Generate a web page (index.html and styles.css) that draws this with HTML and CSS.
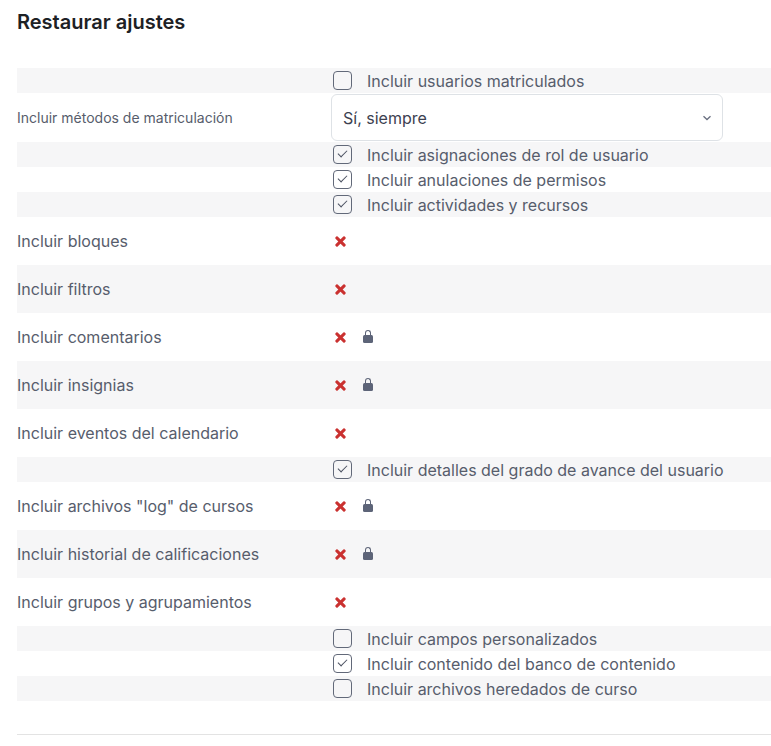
FILE: index.html
```html
<!DOCTYPE html>
<html lang="es">
<head>
  <meta charset="UTF-8">
  <title>Restaurar ajustes</title>
  <link rel="stylesheet" href="styles.css">
</head>
<body>
  <div class="container">
    <h3>Restaurar ajustes</h3>

    <div class="settings">
      <div class="row check-row">
        <div class="label"></div>
        <div class="value"><span class="box"></span>Incluir usuarios matriculados</div>
      </div>
      <div class="row select-row">
        <div class="label small">Incluir métodos de matriculación</div>
        <div class="value">
          <div class="select">
            <span>Sí, siempre</span>
            <svg width="10" height="6" viewBox="0 0 10 6"><path d="M1.5 1.2 5 4.5 8.5 1.2" fill="none" stroke="#6a7080" stroke-width="1.3"/></svg>
          </div>
        </div>
      </div>
      <div class="row check-row">
        <div class="label"></div>
        <div class="value"><span class="box checked"></span>Incluir asignaciones de rol de usuario</div>
      </div>
      <div class="row check-row">
        <div class="label"></div>
        <div class="value"><span class="box checked"></span>Incluir anulaciones de permisos</div>
      </div>
      <div class="row check-row">
        <div class="label"></div>
        <div class="value"><span class="box checked"></span>Incluir actividades y recursos</div>
      </div>
      <div class="row">
        <div class="label">Incluir bloques</div>
        <div class="value"><span class="no"></span></div>
      </div>
      <div class="row">
        <div class="label">Incluir filtros</div>
        <div class="value"><span class="no"></span></div>
      </div>
      <div class="row">
        <div class="label">Incluir comentarios</div>
        <div class="value"><span class="no"></span><span class="lock"></span></div>
      </div>
      <div class="row">
        <div class="label">Incluir insignias</div>
        <div class="value"><span class="no"></span><span class="lock"></span></div>
      </div>
      <div class="row">
        <div class="label">Incluir eventos del calendario</div>
        <div class="value"><span class="no"></span></div>
      </div>
      <div class="row check-row">
        <div class="label"></div>
        <div class="value"><span class="box checked"></span>Incluir detalles del grado de avance del usuario</div>
      </div>
      <div class="row">
        <div class="label">Incluir archivos "log" de cursos</div>
        <div class="value"><span class="no"></span><span class="lock"></span></div>
      </div>
      <div class="row">
        <div class="label">Incluir historial de calificaciones</div>
        <div class="value"><span class="no"></span><span class="lock"></span></div>
      </div>
      <div class="row">
        <div class="label">Incluir grupos y agrupamientos</div>
        <div class="value"><span class="no"></span></div>
      </div>
      <div class="row check-row">
        <div class="label"></div>
        <div class="value"><span class="box"></span>Incluir campos personalizados</div>
      </div>
      <div class="row check-row">
        <div class="label"></div>
        <div class="value"><span class="box checked"></span>Incluir contenido del banco de contenido</div>
      </div>
      <div class="row check-row">
        <div class="label"></div>
        <div class="value"><span class="box"></span>Incluir archivos heredados de curso</div>
      </div>
    </div>

    <hr>
  </div>
</body>
</html>
```

FILE: styles.css
```css
body {
  font-family: 'Inter', 'Noto Sans', sans-serif;
  background-color: white;
  color: #575d6c;
  margin: 0;
  padding: 0;
}
.container {
  padding: 0 0 0 17px;
}
h3 {
  margin: 0;
  padding-top: 10px;
  height: 68px;
  box-sizing: border-box;
  font-size: 20px;
  font-weight: 600;
  color: #1d2125;
}
.settings {
  display: flex;
  flex-direction: column;
}
.row {
  display: grid;
  grid-template-columns: 314px 1fr;
  align-items: center;
  height: 48px;
  font-size: 16px;
}
.row:nth-child(odd) {
  background-color: #f6f6f7;
}
.check-row {
  height: 25px;
}
.select-row {
  height: 49px;
}
.label.small {
  font-size: 14px;
}
.value {
  display: flex;
  align-items: center;
  padding-left: 2px;
}
.box {
  width: 19px;
  height: 19px;
  box-sizing: border-box;
  border: 1.5px solid #626979;
  border-radius: 4px;
  margin-right: 15px;
  position: relative;
}
.box.checked::after {
  content: "";
  position: absolute;
  top: 4px;
  left: 3.5px;
  width: 8px;
  height: 4px;
  border-left: 1.2px solid #4a5060;
  border-bottom: 1.2px solid #4a5060;
  transform: rotate(-45deg);
}
.select {
  width: 392px;
  height: 47px;
  box-sizing: border-box;
  border: 1px solid #dee2e6;
  border-radius: 6px;
  display: flex;
  align-items: center;
  justify-content: space-between;
  padding: 0 10px 0 11px;
  margin-left: -2px;
  background-color: white;
  color: #3c4150;
  font-size: 16px;
}
.no {
  width: 11px;
  height: 11px;
  position: relative;
  margin-left: 2px;
}
.no::before,
.no::after {
  content: "";
  position: absolute;
  left: -1px;
  top: 4px;
  width: 13px;
  height: 3px;
  border-radius: 1px;
  background-color: #ca3130;
  transform: rotate(45deg);
}
.no::after {
  transform: rotate(-45deg);
}
.lock {
  width: 10px;
  height: 8px;
  background-color: #5d6478;
  border-radius: 1.5px;
  margin-left: 17px;
  margin-top: 4px;
  position: relative;
}
.lock::before {
  content: "";
  position: absolute;
  left: 1.5px;
  top: -5px;
  width: 4px;
  height: 6px;
  border: 1.5px solid #5d6478;
  border-bottom: none;
  border-radius: 4px 4px 0 0;
}
hr {
  border: none;
  border-top: 1px solid #e3e3e3;
  margin: 33px 0 0 0;
}
```
